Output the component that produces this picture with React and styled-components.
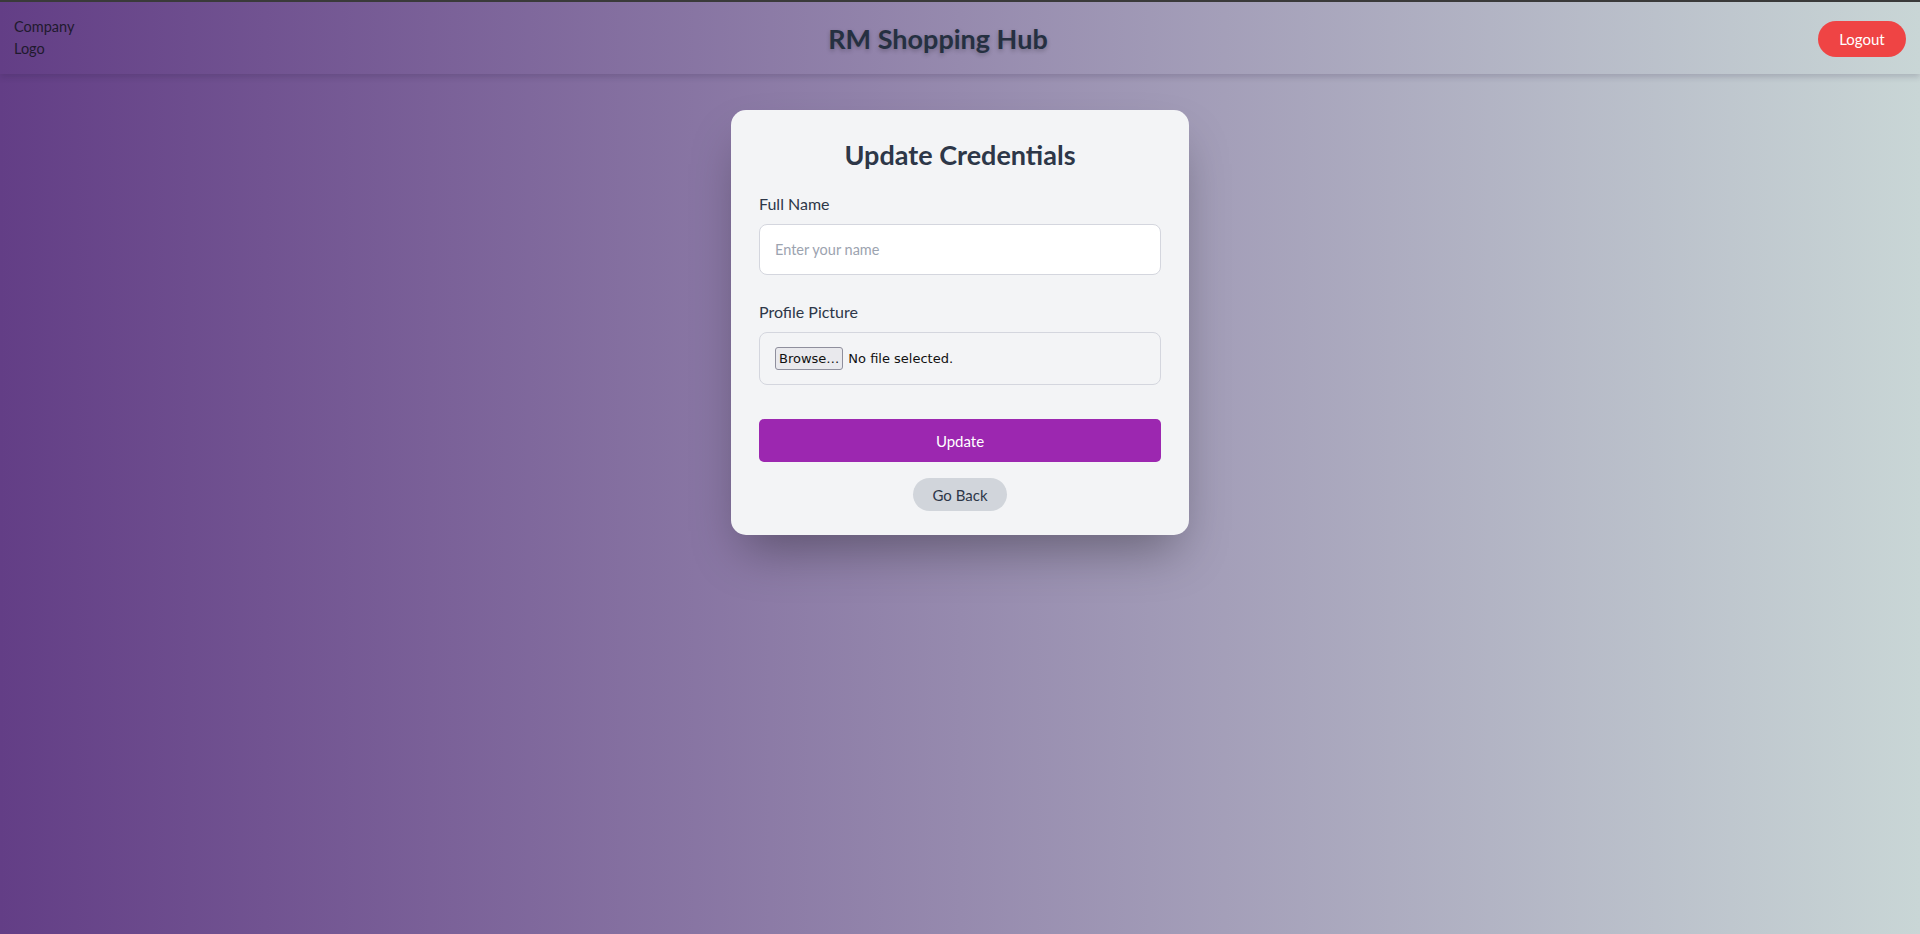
import React from 'react';
import styled, { createGlobalStyle } from 'styled-components';

const GlobalStyle = createGlobalStyle`
	html, body {
		margin: 0;
		padding: 0;
	}
	body {
		font-family: 'Lato', 'Noto Sans', sans-serif;
		min-height: 934px;
		background: linear-gradient(to right, #633e86 0%, #968aae 50%, #c9d6d6 100%);
		border-top: 2px solid #3a3a3a;
		box-sizing: border-box;
	}
	* {
		box-sizing: border-box;
	}
`;

const Page = styled.div`
	min-height: 932px;
	display: flex;
	flex-direction: column;
`;

const Header = styled.header`
	height: 72px;
	padding: 0 14px;
	display: flex;
	align-items: center;
	justify-content: space-between;
	box-shadow: 0 3px 6px rgba(40, 30, 60, 0.18);
`;

const Logo = styled.div`
	width: 60px;
	font-size: 14.5px;
	line-height: 22px;
	color: #1f1a2e;
`;

const Title = styled.h1`
	margin: 0 16px 0 0;
	font-size: 27px;
	font-weight: 700;
	color: #253041;
	text-shadow: 0 2px 4px rgba(0, 0, 0, 0.25);
`;

const LogoutButton = styled.button`
	font-family: inherit;
	font-size: 15px;
	color: #fff;
	background: #ef4444;
	border: 0;
	border-radius: 999px;
	width: 88px;
	height: 36px;
	margin-top: 2px;
	cursor: pointer;
`;

const Main = styled.main`
	display: flex;
	justify-content: center;
	padding-top: 36px;
`;

const Card = styled.div`
	width: 458px;
	background: #f3f4f6;
	border-radius: 15px;
	padding: 28px 28px 24px;
	box-shadow: 0 25px 50px -12px rgba(0, 0, 0, 0.35);
	display: flex;
	flex-direction: column;
`;

const CardTitle = styled.h2`
	margin: 0 0 19px;
	text-align: center;
	font-size: 27px;
	line-height: 34px;
	font-weight: 700;
	color: #2d3748;
`;

const Label = styled.label`
	display: block;
	font-size: 16px;
	line-height: 25px;
	color: #2d3748;
	margin-bottom: 8px;
`;

const Field = styled.div`
	margin-bottom: ${props => props.gap || '24px'};
`;

const TextInput = styled.input`
	width: 100%;
	height: 51px;
	padding: 0 15px;
	font-family: inherit;
	font-size: 14.5px;
	border: 1px solid #d4d6de;
	border-radius: 8px;
	background: #fff;
	color: #2d3748;
	outline: none;
	&::placeholder {
		color: #9ca3af;
	}
`;

const FileBox = styled.div`
	height: 53px;
	border: 1px solid #d4d6de;
	border-radius: 8px;
	padding: 0 15px;
	display: flex;
	align-items: center;
	gap: 5px;
	font-family: 'DejaVu Sans', sans-serif;
	font-size: 13px;
	color: #111;
`;

const BrowseButton = styled.span`
	display: inline-flex;
	align-items: center;
	height: 23px;
	padding: 0 3px;
	background: #e9e9ed;
	border: 1px solid #8f8f9d;
	border-radius: 3px;
`;

const UpdateButton = styled.button`
	width: 100%;
	height: 43px;
	border: 0;
	border-radius: 5px;
	background: #9c27b0;
	color: #fff;
	font-family: inherit;
	font-size: 15px;
	cursor: pointer;
`;

const BackButton = styled.button`
	align-self: center;
	margin-top: 16px;
	width: 94px;
	height: 33px;
	border: 0;
	border-radius: 999px;
	background: #d1d5db;
	color: #2d3748;
	font-family: inherit;
	font-size: 15px;
	cursor: pointer;
`;

const App = () => (
	<Page>
		<GlobalStyle />
		<Header>
			<Logo>Company Logo</Logo>
			<Title>RM Shopping Hub</Title>
			<LogoutButton>Logout</LogoutButton>
		</Header>
		<Main>
			<Card>
				<CardTitle>Update Credentials</CardTitle>
				<Field>
					<Label>Full Name</Label>
					<TextInput placeholder="Enter your name" />
				</Field>
				<Field gap="34px">
					<Label>Profile Picture</Label>
					<FileBox>
						<BrowseButton>Browse…</BrowseButton>
						<span>No file selected.</span>
					</FileBox>
				</Field>
				<UpdateButton>Update</UpdateButton>
				<BackButton>Go Back</BackButton>
			</Card>
		</Main>
	</Page>
);

export default App;
